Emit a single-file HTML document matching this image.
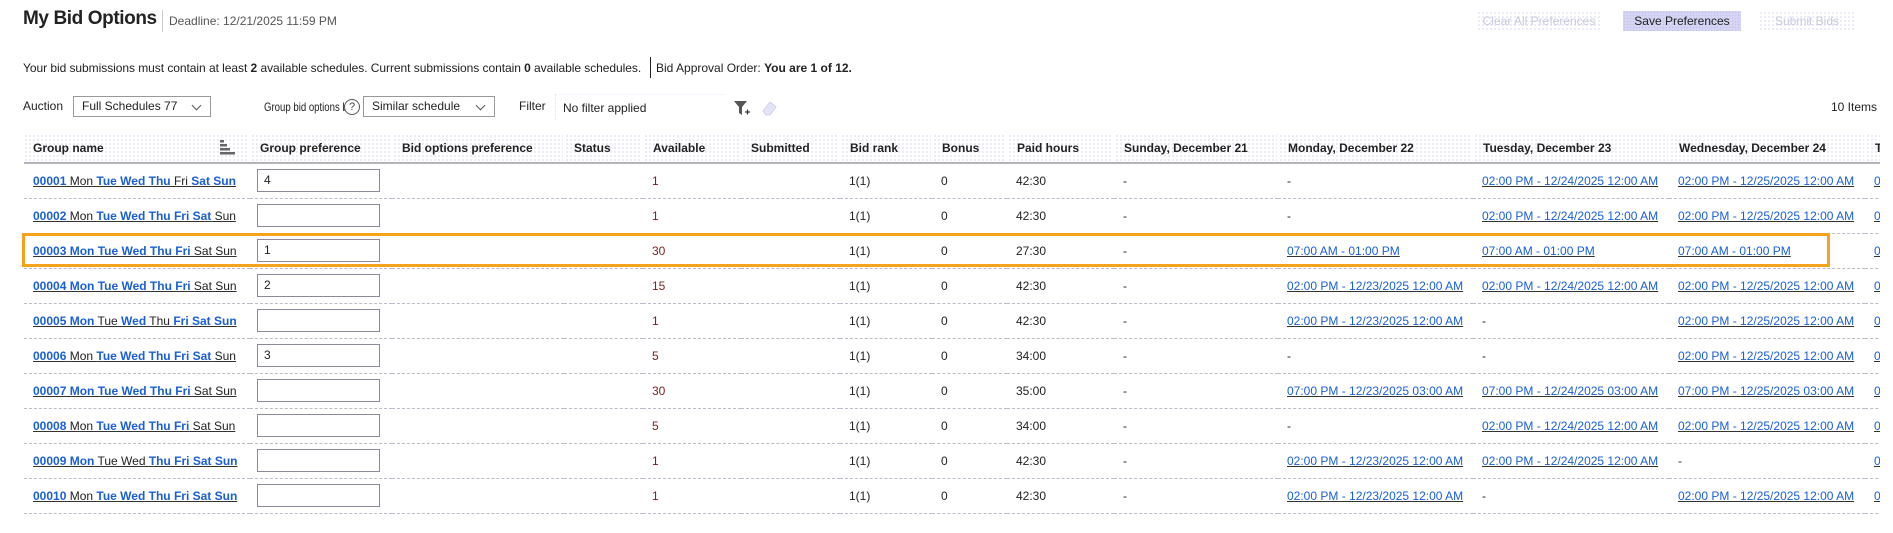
<!DOCTYPE html>
<html><head><meta charset="utf-8"><style>
*{box-sizing:border-box;margin:0;padding:0}
body{width:1893px;height:533px;background:#fff;font-family:"Liberation Sans",Arial,sans-serif;color:#222;position:relative;overflow:hidden;font-size:12px}
.abs{position:absolute;white-space:nowrap}
.dots{background-color:#fff;background-image:radial-gradient(circle,#dadaf2 0.7px,transparent 0.9px);background-size:4px 4px}
.btn{position:absolute;top:11px;height:20px;line-height:20px;text-align:center;font-size:12px}
.sel{position:absolute;top:96px;height:21px;border:1px solid #999;background:#fff;font-size:12px;line-height:19px;padding-left:8px}
.sel:after{content:"";position:absolute;right:10px;top:5px;width:6px;height:6px;border-right:1.3px solid #555;border-bottom:1.3px solid #555;transform:rotate(45deg)}
#tw{position:absolute;left:24px;top:134px;width:1856px;height:385px;overflow:hidden}
table{border-collapse:collapse;table-layout:fixed;width:1900px}
th{height:29px;text-align:left;font-weight:bold;font-size:12px;padding-left:9px;border-right:2px solid #fff;border-bottom:2px solid #b4b4bc;white-space:nowrap;overflow:hidden}
td{height:35px;padding-left:9px;white-space:nowrap;overflow:hidden;border-bottom:1px dashed #bcbcc8;font-size:12px}
.g{text-decoration:underline;text-decoration-color:#333}
.g b,.l{color:#1a5fd8}
.g b{font-weight:bold}
.l{text-decoration:underline;text-decoration-color:#333}
.r{color:#7a1f1f}
.in{display:block;width:123px;height:23px;border:1px solid #8a8a9a;padding-left:6px;line-height:21px;margin-left:-2px}
</style></head><body>
<div class="abs" style="left:23px;top:8px;font-size:19px;font-weight:bold;letter-spacing:-0.4px">My Bid Options</div>
<div class="abs" style="left:162px;top:10px;width:1px;height:22px;background:#ccc"></div>
<div class="abs" style="left:169px;top:14px;font-size:12px;color:#555">Deadline: 12/21/2025 11:59 PM</div>
<div class="btn dots" style="left:1477px;width:124px;color:#c8c8dc">Clear All Preferences</div>
<div class="btn" style="left:1623px;width:118px;background:#d6d6f4;color:#222;background-image:radial-gradient(circle,#c4c4ea 0.7px,transparent 0.9px);background-size:3px 3px">Save Preferences</div>
<div class="btn dots" style="left:1759px;width:96px;color:#c8c8dc">Submit Bids</div>
<div class="abs" style="left:23px;top:61px;font-size:12px;letter-spacing:-0.05px">Your bid submissions must contain at least <b>2</b> available schedules. Current submissions contain <b>0</b> available schedules.</div>
<div class="abs" style="left:650px;top:57px;width:1px;height:21px;background:#222"></div>
<div class="abs" style="left:656px;top:61px;font-size:12px">Bid Approval Order: <b>You are 1 of 12.</b></div>
<div class="abs" style="left:23px;top:99px">Auction</div>
<div class="sel" style="left:73px;width:138px">Full Schedules 77</div>
<div class="abs" style="left:264px;top:100px;transform:scaleX(0.8);transform-origin:0 0">Group bid options by</div>
<div class="abs" style="left:344px;top:99px;width:16px;height:16px;border:1.2px solid #555;border-radius:50%;text-align:center;font-size:11px;line-height:14px;color:#444;background:#fff">?</div>
<div class="sel" style="left:363px;width:132px">Similar schedule</div>
<div class="abs" style="left:519px;top:99px">Filter</div>
<div class="abs" style="left:555px;top:94px;width:170px;height:26px;border-left:1px dotted #dde;border-top:1px dotted #eef"></div>
<div class="abs" style="left:563px;top:101px">No filter applied</div>
<svg class="abs" style="left:733px;top:100px" width="18" height="17" viewBox="0 0 18 17"><path d="M1 1h13l-5 6v8l-3 -2v-6z" fill="#555"/><path d="M12 12h5M14.5 9.5v5" stroke="#333" stroke-width="1.2"/></svg>
<svg class="abs" style="left:760px;top:100px" width="18" height="16" viewBox="0 0 18 16"><path d="M3 11l7-9 6 5-6 8h-4z" fill="#e4e4f6" stroke="#d0d0ee"/></svg>
<div class="abs" style="right:16px;top:100px">10 Items</div>
<div class="abs" style="left:24px;top:134px;width:1856px;height:1px;border-top:1px dotted #e6e6f2"></div>

<div id="tw"><table>
<colgroup><col style="width:226px"><col style="width:142px"><col style="width:172px"><col style="width:79px"><col style="width:98px"><col style="width:99px"><col style="width:92px"><col style="width:75px"><col style="width:107px"><col style="width:164px"><col style="width:195px"><col style="width:196px"><col style="width:196px"><col style="width:60px"></colgroup>
<tr class="h"><th class="dots" style="position:relative">Group name<svg style="position:absolute;left:196px;top:6px" width="16" height="15" viewBox="0 0 16 15"><rect x="0" y="0" width="4" height="2.5" fill="#666"/><rect x="0" y="4" width="7" height="2.5" fill="#666"/><rect x="0" y="8" width="10" height="2.5" fill="#666"/><rect x="0" y="12" width="15" height="2.5" fill="#666"/></svg></th><th class="dots">Group preference</th><th class="dots">Bid options preference</th><th class="dots">Status</th><th class="dots">Available</th><th class="dots">Submitted</th><th class="dots">Bid rank</th><th class="dots">Bonus</th><th class="dots">Paid hours</th><th class="dots">Sunday, December 21</th><th class="dots">Monday, December 22</th><th class="dots">Tuesday, December 23</th><th class="dots">Wednesday, December 24</th><th class="dots">Thursday, December 25</th></tr>
<tr><td><span class="g"><b>00001</b> Mon <b>Tue Wed Thu</b> Fri <b>Sat Sun</b></span></td><td><span class="in">4</span></td><td></td><td></td><td class="r">1</td><td></td><td>1(1)</td><td>0</td><td>42:30</td><td>-</td><td>-</td><td><span class="l">02:00 PM - 12/24/2025 12:00 AM</span></td><td><span class="l">02:00 PM - 12/25/2025 12:00 AM</span></td><td><span class="l">02:00 PM</span></td></tr>
<tr><td><span class="g"><b>00002</b> Mon <b>Tue Wed Thu Fri Sat</b> Sun</span></td><td><span class="in"></span></td><td></td><td></td><td class="r">1</td><td></td><td>1(1)</td><td>0</td><td>42:30</td><td>-</td><td>-</td><td><span class="l">02:00 PM - 12/24/2025 12:00 AM</span></td><td><span class="l">02:00 PM - 12/25/2025 12:00 AM</span></td><td><span class="l">02:00 PM</span></td></tr>
<tr style="background:#fff"><td><span class="g"><b>00003 Mon Tue Wed Thu Fri</b> Sat Sun</span></td><td><span class="in">1</span></td><td></td><td></td><td class="r">30</td><td></td><td>1(1)</td><td>0</td><td>27:30</td><td>-</td><td><span class="l">07:00 AM - 01:00 PM</span></td><td><span class="l">07:00 AM - 01:00 PM</span></td><td><span class="l">07:00 AM - 01:00 PM</span></td><td><span class="l">07:00 AM</span></td></tr>
<tr><td><span class="g"><b>00004 Mon Tue Wed Thu Fri</b> Sat Sun</span></td><td><span class="in">2</span></td><td></td><td></td><td class="r">15</td><td></td><td>1(1)</td><td>0</td><td>42:30</td><td>-</td><td><span class="l">02:00 PM - 12/23/2025 12:00 AM</span></td><td><span class="l">02:00 PM - 12/24/2025 12:00 AM</span></td><td><span class="l">02:00 PM - 12/25/2025 12:00 AM</span></td><td><span class="l">02:00 PM</span></td></tr>
<tr><td><span class="g"><b>00005 Mon</b> Tue <b>Wed</b> Thu <b>Fri Sat Sun</b></span></td><td><span class="in"></span></td><td></td><td></td><td class="r">1</td><td></td><td>1(1)</td><td>0</td><td>42:30</td><td>-</td><td><span class="l">02:00 PM - 12/23/2025 12:00 AM</span></td><td>-</td><td><span class="l">02:00 PM - 12/25/2025 12:00 AM</span></td><td><span class="l">02:00 PM</span></td></tr>
<tr><td><span class="g"><b>00006</b> Mon <b>Tue Wed Thu Fri Sat</b> Sun</span></td><td><span class="in">3</span></td><td></td><td></td><td class="r">5</td><td></td><td>1(1)</td><td>0</td><td>34:00</td><td>-</td><td>-</td><td>-</td><td><span class="l">02:00 PM - 12/25/2025 12:00 AM</span></td><td><span class="l">02:00 PM</span></td></tr>
<tr><td><span class="g"><b>00007 Mon Tue Wed Thu Fri</b> Sat Sun</span></td><td><span class="in"></span></td><td></td><td></td><td class="r">30</td><td></td><td>1(1)</td><td>0</td><td>35:00</td><td>-</td><td><span class="l">07:00 PM - 12/23/2025 03:00 AM</span></td><td><span class="l">07:00 PM - 12/24/2025 03:00 AM</span></td><td><span class="l">07:00 PM - 12/25/2025 03:00 AM</span></td><td><span class="l">07:00 PM</span></td></tr>
<tr><td><span class="g"><b>00008</b> Mon <b>Tue Wed Thu Fri</b> Sat Sun</span></td><td><span class="in"></span></td><td></td><td></td><td class="r">5</td><td></td><td>1(1)</td><td>0</td><td>34:00</td><td>-</td><td>-</td><td><span class="l">02:00 PM - 12/24/2025 12:00 AM</span></td><td><span class="l">02:00 PM - 12/25/2025 12:00 AM</span></td><td><span class="l">02:00 PM</span></td></tr>
<tr><td><span class="g"><b>00009 Mon</b> Tue Wed <b>Thu Fri Sat Sun</b></span></td><td><span class="in"></span></td><td></td><td></td><td class="r">1</td><td></td><td>1(1)</td><td>0</td><td>42:30</td><td>-</td><td><span class="l">02:00 PM - 12/23/2025 12:00 AM</span></td><td><span class="l">02:00 PM - 12/24/2025 12:00 AM</span></td><td>-</td><td><span class="l">02:00 PM</span></td></tr>
<tr><td><span class="g"><b>00010</b> Mon <b>Tue Wed Thu Fri Sat Sun</b></span></td><td><span class="in"></span></td><td></td><td></td><td class="r">1</td><td></td><td>1(1)</td><td>0</td><td>42:30</td><td>-</td><td><span class="l">02:00 PM - 12/23/2025 12:00 AM</span></td><td>-</td><td><span class="l">02:00 PM - 12/25/2025 12:00 AM</span></td><td><span class="l">02:00 PM</span></td></tr>
</table></div>
<div class="abs" style="left:22px;top:233px;width:1808px;height:34px;border:3px solid #f5a31a"></div>
</body></html>
